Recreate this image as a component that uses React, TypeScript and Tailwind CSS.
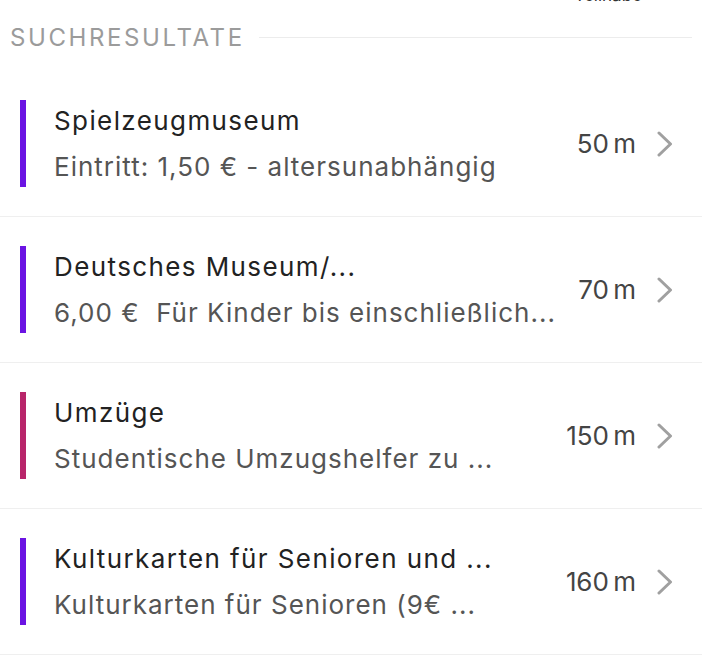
type Result = {
  title: string;
  subtitle: string;
  distance: string;
  color: string;
};

const RESULTS: Result[] = [
  {
    title: "Spielzeugmuseum",
    subtitle: "Eintritt: 1,50 € - altersunabhängig",
    distance: "50 m",
    color: "bg-[#6b14e3]",
  },
  {
    title: "Deutsches Museum/...",
    subtitle: "6,00 €  Für Kinder bis einschließlich...",
    distance: "70 m",
    color: "bg-[#6b14e3]",
  },
  {
    title: "Umzüge",
    subtitle: "Studentische Umzugshelfer zu ...",
    distance: "150 m",
    color: "bg-[#b8256a]",
  },
  {
    title: "Kulturkarten für Senioren und ...",
    subtitle: "Kulturkarten für Senioren (9€ ...",
    distance: "160 m",
    color: "bg-[#6b14e3]",
  },
];

function Chevron() {
  return (
    <svg width="18" height="26" viewBox="0 0 18 26" fill="none" className="ml-[20px]">
      <polyline
        points="3,2 14.5,13 3,24"
        stroke="#a0a0a0"
        strokeWidth={3}
        strokeLinecap="round"
        strokeLinejoin="round"
      />
    </svg>
  );
}

function ResultRow({ item }: { item: Result }) {
  return (
    <div className="flex items-center h-[146px] border-b border-[#efefef]">
      <div className={`w-[6px] h-[87px] ml-[20px] shrink-0 ${item.color}`} />
      <div className="flex-1 min-w-0 ml-[28px] flex flex-col">
        <p className="text-[26px] leading-[34px] mt-[1px] text-[#222] tracking-[1.4px] whitespace-pre">
          {item.title}
        </p>
        <p className="text-[26px] leading-[34px] mt-[12px] text-[#555] tracking-[1px] whitespace-pre">
          {item.subtitle}
        </p>
      </div>
      <div className="flex items-center shrink-0 pr-[28px]">
        <span className="text-[26px] text-[#444] tracking-[-0.1px] whitespace-pre">
          {item.distance.replace(" ", "\u2009")}
        </span>
        <Chevron />
      </div>
    </div>
  );
}

export default function App() {
  return (
    <div className="w-[702px] h-[664px] bg-white overflow-hidden font-['Inter','Liberation_Sans',sans-serif]">
      <div className="flex justify-end pr-[60px] h-[4px] overflow-hidden">
        <span className="text-[17px] leading-[17px] -mt-[13px] text-[#333]">Teilhabe</span>
      </div>
      <div className="flex items-center h-[67px] pl-[10px] pr-[10px]">
        <span className="text-[24px] text-[#9b9b9b] tracking-[2.6px]">SUCHRESULTATE</span>
        <div className="flex-1 h-px bg-[#ececec] ml-[14px]" />
      </div>
      {RESULTS.map((r) => (
        <ResultRow key={r.title} item={r} />
      ))}
    </div>
  );
}
